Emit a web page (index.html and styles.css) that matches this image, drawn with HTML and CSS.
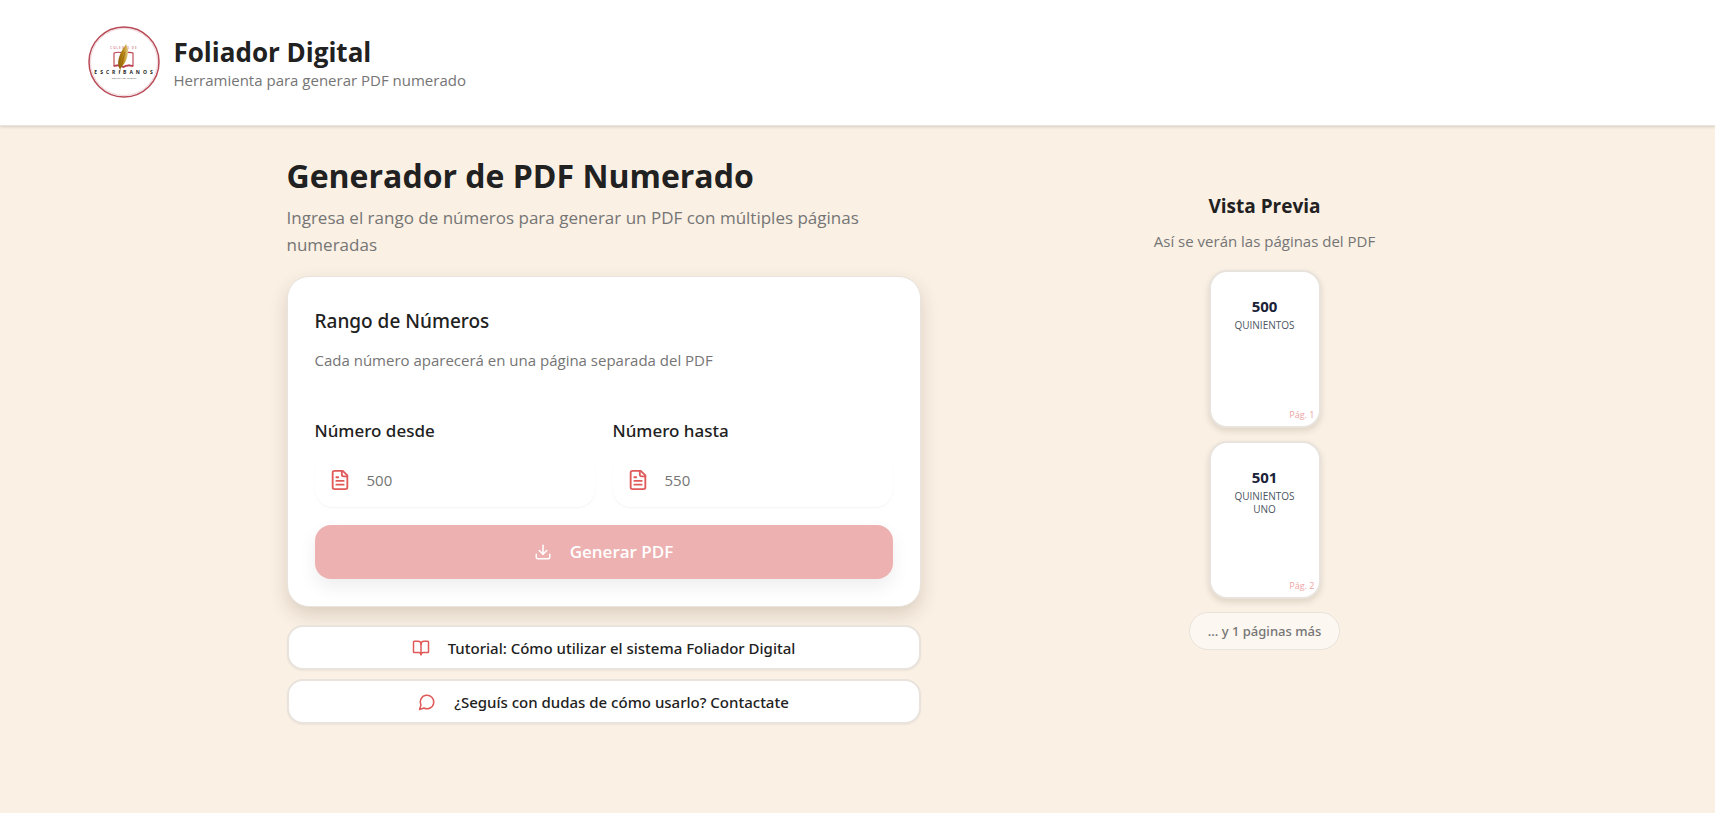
FILE: index.html
```html
<!DOCTYPE html>
<html lang="es">
<head>
    <meta charset="UTF-8">
    <meta name="viewport" content="width=device-width, initial-scale=1.0">
    <title>Foliador Digital</title>
    <link rel="stylesheet" href="styles.css">
</head>
<body>
    <header class="header">
        <div class="header-inner">
            <svg class="logo" viewBox="0 0 72 72" role="img" aria-label="Colegio de Escribanos">
                <defs>
                    <linearGradient id="pluma" x1="0" y1="0" x2="1" y2="0">
                        <stop offset="0" stop-color="#8a5a0c"/>
                        <stop offset="0.5" stop-color="#b8860f"/>
                        <stop offset="1" stop-color="#e6cf8c"/>
                    </linearGradient>
                </defs>
                <circle cx="36" cy="36" r="35" fill="#fff" stroke="#b84a57" stroke-width="1.5"/>
                <circle cx="36" cy="36" r="33.5" fill="none" stroke="#e6c3c7" stroke-width="0.7"/>
                <text class="logo-top" x="36" y="22.5" text-anchor="middle">COLEGIO DE</text>
                <path d="M35.500 27.500C32 25.800 29 26 26 27v13c3-1 6-.8 9.500 1 2.500-1.800 6-2 9.500-1V27c-3-1-6-1-9.500.5z" fill="none" stroke="#b8404e" stroke-width="1.100"/>
                <path d="M26 40c3-1 6-.8 9.500 1 2.500-1.800 6-2 9.500-1" fill="none" stroke="#b8404e" stroke-width="1.800"/>
                <path d="M38.500 17.500c-.5 3 2 4 1.600 8-.5 7-3.100 13-8.600 17.500-3-7-1-14 7-25.500z" fill="url(#pluma)"/>
                <path d="M31.500 46.500 37 26" stroke="#8a5a0c" stroke-width="0.600"/>
                <text class="logo-name" x="37" y="47.500" text-anchor="middle">ESCRIBANOS</text>
                <text class="logo-sub" x="36" y="53" text-anchor="middle">PROVINCIA DEL NEUQUÉN</text>
            </svg>
            <div>
                <p class="brand">Foliador Digital</p>
                <p class="tagline">Herramienta para generar PDF numerado</p>
            </div>
        </div>
    </header>

    <main class="container">
        <section class="generator">
            <h1>Generador de PDF Numerado</h1>
            <p class="lead">Ingresa el rango de números para generar un PDF con múltiples páginas numeradas</p>

            <form class="card">
                <h2>Rango de Números</h2>
                <p class="hint">Cada número aparecerá en una página separada del PDF</p>
                <div class="fields">
                    <div class="field">
                        <label for="desde">Número desde</label>
                        <div class="input-box">
                            <svg class="icon" viewBox="0 0 24 24"><path d="M15 2H6a2 2 0 0 0-2 2v16a2 2 0 0 0 2 2h12a2 2 0 0 0 2-2V7Z"/><path d="M14 2v4a2 2 0 0 0 2 2h4"/><path d="M10 9H8"/><path d="M16 13H8"/><path d="M16 17H8"/></svg>
                            <input type="text" inputmode="numeric" id="desde" name="desde" placeholder="500">
                        </div>
                    </div>
                    <div class="field">
                        <label for="hasta">Número hasta</label>
                        <div class="input-box">
                            <svg class="icon" viewBox="0 0 24 24"><path d="M15 2H6a2 2 0 0 0-2 2v16a2 2 0 0 0 2 2h12a2 2 0 0 0 2-2V7Z"/><path d="M14 2v4a2 2 0 0 0 2 2h4"/><path d="M10 9H8"/><path d="M16 13H8"/><path d="M16 17H8"/></svg>
                            <input type="text" inputmode="numeric" id="hasta" name="hasta" placeholder="550">
                        </div>
                    </div>
                </div>
                <button type="submit" class="btn-generar" disabled>
                    <svg class="icon icon-sm" viewBox="0 0 24 24"><path d="M21 15v4a2 2 0 0 1-2 2H5a2 2 0 0 1-2-2v-4"/><path d="m7 10 5 5 5-5"/><path d="M12 15V3"/></svg>
                    Generar PDF
                </button>
            </form>

            <nav class="links">
                <a href="#tutorial">
                    <svg class="icon icon-sm" viewBox="0 0 24 24"><path d="M12 7v14"/><path d="M3 18a1 1 0 0 1-1-1V4a1 1 0 0 1 1-1h5a4 4 0 0 1 4 4 4 4 0 0 1 4-4h5a1 1 0 0 1 1 1v13a1 1 0 0 1-1 1h-6a3 3 0 0 0-3 3 3 3 0 0 0-3-3z"/></svg>
                    Tutorial: Cómo utilizar el sistema Foliador Digital
                </a>
                <a href="#contacto">
                    <svg class="icon icon-sm" viewBox="0 0 24 24"><path d="M7.900 20A9 9 0 1 0 4 16.100L2 22Z"/></svg>
                    ¿Seguís con dudas de cómo usarlo? Contactate
                </a>
            </nav>
        </section>

        <aside class="preview">
            <h3>Vista Previa</h3>
            <p class="preview-text">Así se verán las páginas del PDF</p>
            <div class="page">
                <strong>500</strong>
                <span class="words">QUINIENTOS</span>
                <span class="page-number">Pág. 1</span>
            </div>
            <div class="page">
                <strong>501</strong>
                <span class="words">QUINIENTOS UNO</span>
                <span class="page-number">Pág. 2</span>
            </div>
            <p class="more">... y 1 páginas más</p>
        </aside>
    </main>
</body>
</html>
```
FILE: styles.css
```css
* {
    box-sizing: border-box;
}
body {
    font-family: "Segoe UI", "Open Sans", "Noto Sans", sans-serif;
    font-size: 15px;
    line-height: 24px;
    color: #212121;
    background-color: #faf0e4;
    margin: 0;
    min-height: 100vh;
}
h1, h2, h3, p {
    margin: 0;
}
/* Open Sans no trae peso 500 */
h2, .field label, .links a, .more {
    font-family: "Segoe UI", "Noto Sans", sans-serif;
    font-weight: 500;
}
.header {
    background: #fff;
    border-bottom: 1px solid #e8e3dc;
    box-shadow: 0 1px 3px rgba(0, 0, 0, 0.15);
}
.header-inner {
    display: flex;
    align-items: center;
    gap: 14px;
    max-width: 1576px;
    margin: 0 auto;
    padding: 26px 18px 27px;
}
.logo {
    width: 72px;
    height: 72px;
}
.logo-top {
    font-size: 3px;
    letter-spacing: 1px;
    fill: #b8404e;
}
.logo-name {
    font-size: 5px;
    font-weight: bold;
    letter-spacing: 3px;
    fill: #222;
}
.logo-sub {
    font-size: 2px;
    fill: #444;
}
.brand {
    font-size: 26px;
    font-weight: bold;
    line-height: 32px;
    margin-top: 4px;
}
.tagline, .hint, .preview-text {
    color: #757575;
}
.container {
    display: flex;
    gap: 180px;
    max-width: 1178px;
    margin: 0 auto;
    padding: 27px 18px;
}
.generator {
    flex: 1;
}
h1 {
    font-size: 32px;
    line-height: 45px;
}
.lead {
    font-size: 17px;
    line-height: 27px;
    margin: 6px 0 18px;
    color: #757575;
}
.card {
    padding: 27px;
    background: #fff;
    border: 1px solid #e8e3dc;
    border-radius: 22px;
    box-shadow: 0 8px 18px rgba(60, 40, 10, 0.16);
}
h2 {
    font-size: 19px;
    line-height: 34px;
    margin-bottom: 10px;
}
.fields {
    display: flex;
    gap: 18px;
    margin: 45px 0 18px;
}
.field {
    flex: 1;
}
.field label {
    display: block;
    font-size: 17px;
    line-height: 27px;
    margin-bottom: 9px;
}
.input-box {
    display: flex;
    align-items: center;
    gap: 16px;
    height: 54px;
    padding: 0 14px;
    border-radius: 18px;
    box-shadow: 0 1px 2px rgba(0, 0, 0, 0.05);
}
.input-box input {
    flex: 1;
    min-width: 0;
    padding: 0;
    font: inherit;
    border: none;
    outline: none;
    background: none;
}
.input-box input::placeholder {
    color: #757575;
}
.icon {
    width: 22px;
    height: 22px;
    fill: none;
    stroke: #e05a5a;
    stroke-width: 2;
    stroke-linecap: round;
    stroke-linejoin: round;
}
.icon-sm {
    width: 18px;
    height: 18px;
}
.btn-generar {
    display: flex;
    align-items: center;
    justify-content: center;
    gap: 18px;
    width: 100%;
    height: 54px;
    font: inherit;
    font-size: 17px;
    font-weight: 600;
    color: #fff;
    background-color: #edb1b1;
    border: none;
    border-radius: 16px;
    box-shadow: 0 8px 18px rgba(0, 0, 0, 0.07);
}
.btn-generar .icon {
    stroke: #fff;
}
.links {
    display: grid;
    gap: 9px;
    margin-top: 18px;
}
.links a {
    display: flex;
    align-items: center;
    justify-content: center;
    gap: 18px;
    height: 45px;
    color: #212121;
    text-decoration: none;
    background: #fff;
    border: 2px solid #e8e3dc;
    border-radius: 16px;
    box-shadow: 0 1px 2px rgba(0, 0, 0, 0.05);
}
.preview {
    display: flex;
    flex: none;
    flex-direction: column;
    align-items: center;
    width: 328px;
    padding-top: 38px;
}
h3 {
    font-size: 19px;
    line-height: 30px;
}
.preview-text {
    margin: 8px 0 17px;
}
.page {
    position: relative;
    display: flex;
    flex-direction: column;
    align-items: center;
    width: 112px;
    height: 158px;
    margin-bottom: 13px;
    padding: 22px 18px;
    text-align: center;
    background: #fff;
    border: 2px solid #e8e3dc;
    border-radius: 18px;
    box-shadow: 0 3px 6px rgba(60, 40, 10, 0.14);
}
.page strong {
    color: #1a2238;
}
.words {
    font-size: 10px;
    line-height: 13px;
    margin-top: 1px;
    color: #4b5563;
}
.page-number {
    position: absolute;
    right: 4px;
    bottom: 5px;
    font-size: 9px;
    line-height: 13px;
    color: #eea3a3;
}
.more {
    padding: 6px 18px;
    font-size: 13px;
    color: #757575;
    background: #fcf7f0;
    border: 1px solid #e8e3dc;
    border-radius: 19px;
}
```
